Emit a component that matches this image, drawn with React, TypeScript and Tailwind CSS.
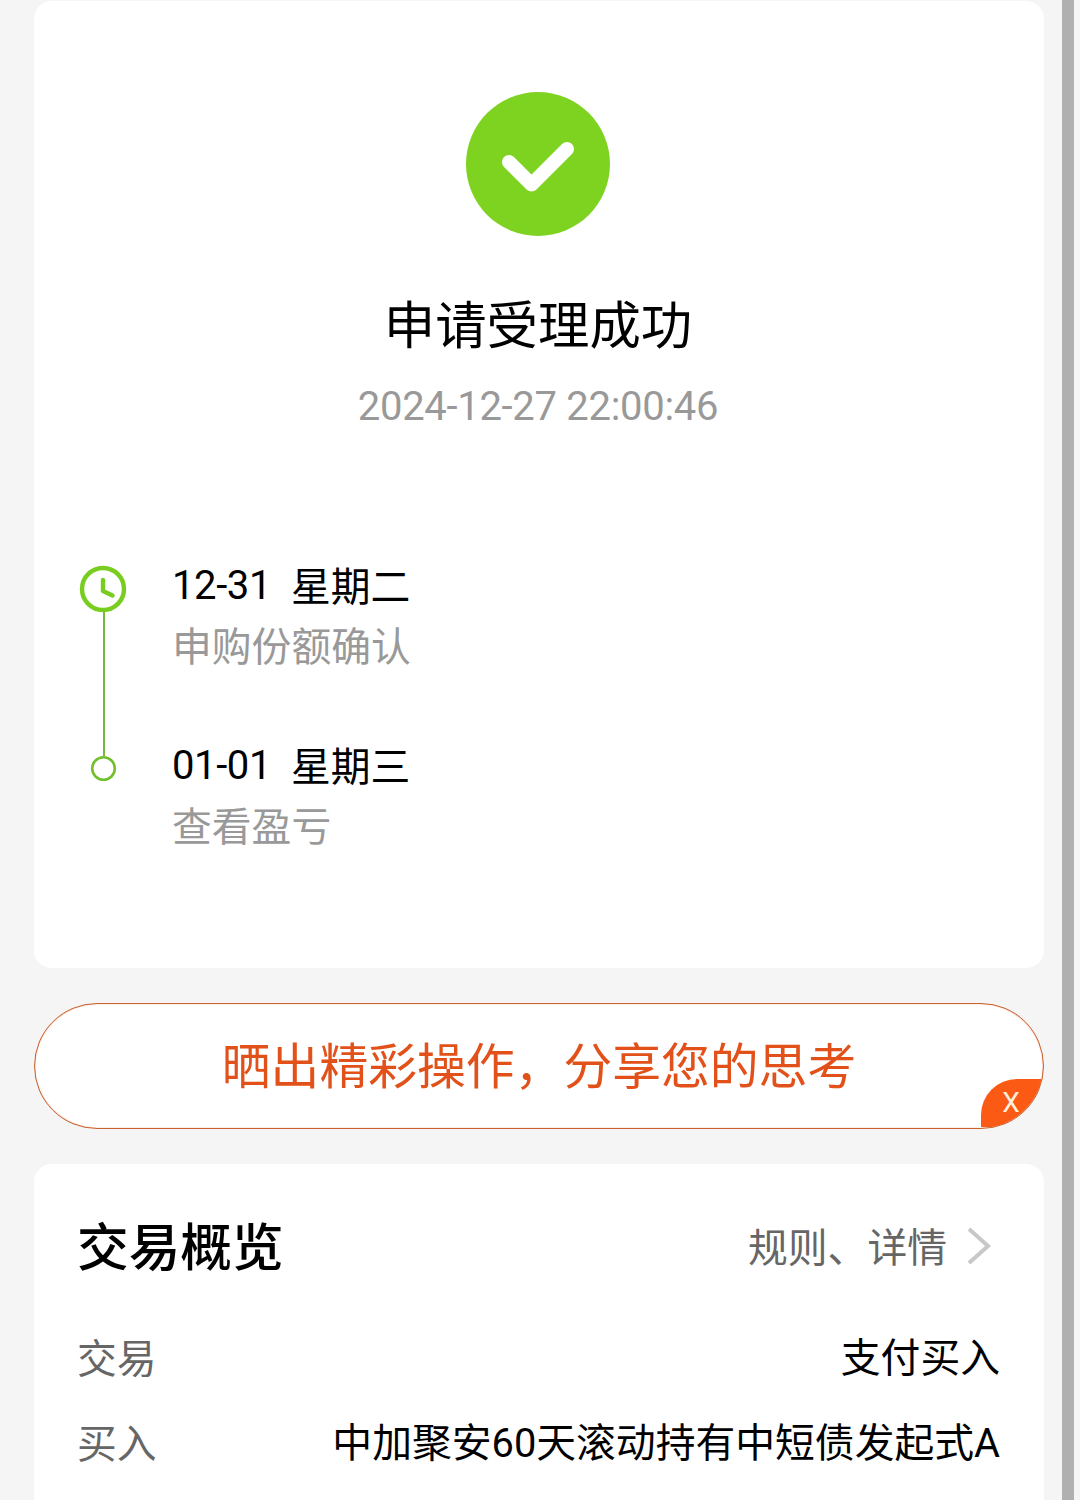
import React from 'react';

interface StepProps {
    date: string;
    weekday: string;
    label: string;
}

interface RowProps {
    label: string;
    value: string;
}

const steps: StepProps[] = [
    { date: '12-31', weekday: '星期二', label: '申购份额确认' },
    { date: '01-01', weekday: '星期三', label: '查看盈亏' },
];

const rows: RowProps[] = [
    { label: '交易', value: '支付买入' },
    { label: '买入', value: '中加聚安60天滚动持有中短债发起式A' },
];

const Step: React.FC<StepProps> = ({ date, weekday, label }) => (
    <div className="h-[180px]">
        <div className="flex h-[60px] items-center gap-[22px] text-black">
            <span className="w-[97px] whitespace-nowrap text-[40px] tracking-[-0.4px]">{date}</span>
            <span className="pt-[3px]">{weekday}</span>
        </div>
        <div className="flex h-[60px] items-center pt-[3px] text-[#999999]">{label}</div>
    </div>
);

const Row: React.FC<RowProps> = ({ label, value }) => (
    <div className="flex h-[85px] items-center justify-between whitespace-nowrap">
        <span className="-ml-px pt-[2px] text-[#666666]">{label}</span>
        <span className="pt-px text-black">{value}</span>
    </div>
);

const Timeline: React.FC = () => (
    <svg className="ml-[44px] shrink-0" width="50" height="230" viewBox="0 0 50 230" fill="none">
        <path d="M26 47V193" stroke="#72b840" strokeWidth="2" />
        <circle cx="25" cy="26" r="21" stroke="#78cd20" strokeWidth="4.400" />
        <path d="M25 17V28L34.500 32.500" stroke="#78cd20" strokeWidth="4.400" strokeLinecap="round" strokeLinejoin="round" />
        <circle cx="25.500" cy="205.500" r="11.300" stroke="#72c02c" strokeWidth="2.600" />
    </svg>
);

const App: React.FC = () => {
    return (
        <div className="flex h-[1500px] w-[1080px] justify-between overflow-hidden bg-[#f5f5f5] pl-[34px] pr-[6px] font-['Roboto','Noto_Sans_CJK_SC',sans-serif] text-[39.800px] leading-[60px]">
            <main className="w-[1010px] pt-px">
                <section className="flex h-[967px] flex-col rounded-[18px] bg-white pt-[91px]">
                    <div className="flex flex-col items-center pr-[2px]">
                        <svg width="144" height="144" viewBox="0 0 144 144" fill="none">
                            <circle cx="72" cy="72" r="72" fill="#7ed321" />
                            <path d="M43 70L65.500 92.500L101 57" stroke="white" strokeWidth="14" strokeLinecap="round" strokeLinejoin="round" />
                        </svg>
                        <h1 className="mt-[53px] text-[51.400px] leading-[76px] text-black">申请受理成功</h1>
                        <p className="mt-[12px] text-[40px] leading-[60px] tracking-[-0.3px] text-[#999999]">2024-12-27 22:00:46</p>
                    </div>
                    <div className="mt-[126px] flex">
                        <Timeline />
                        <div className="-mt-[7px] ml-[44px]">
                            {steps.map((step) => <Step key={step.date} {...step} />)}
                        </div>
                    </div>
                </section>

                <section className="relative mt-[35px] flex h-[126px] items-center justify-center overflow-hidden rounded-[63px] border border-[#c8622f] bg-white shadow-[inset_0_0_1px_#e2511a]">
                    <span className="pt-[3px] text-[48.800px] text-[#e2511a]">晒出精彩操作，分享您的思考</span>
                    <button className="absolute bottom-px right-0 flex h-[48px] w-[62px] items-center justify-center rounded-tl-[36px] bg-[#fa5a14] pr-[2px] text-[28px] text-[#ffeedd]">X</button>
                </section>

                <section className="mt-[35px] h-[400px] rounded-t-[18px] bg-white px-[44px] pt-[44px]">
                    <div className="flex h-[76px] items-center justify-between">
                        <h2 className="-ml-px pt-[6px] text-[51.700px] font-medium text-black">交易概览</h2>
                        <div className="flex items-center text-[#666666]">
                            <span className="pt-[5px]">规则、详情</span>
                            <svg className="ml-[20px] mr-[8px]" width="25" height="40" viewBox="0 0 25 40" fill="none">
                                <path d="M2 3L21 20L2 37" stroke="#c8c8c8" strokeWidth="4" />
                            </svg>
                        </div>
                    </div>
                    <div className="mt-[32px]">
                        {rows.map((row) => <Row key={row.label} {...row} />)}
                    </div>
                </section>
            </main>
            <div className="w-[12px] bg-[#b0b0b0]" />
        </div>
    );
};

export default App;
